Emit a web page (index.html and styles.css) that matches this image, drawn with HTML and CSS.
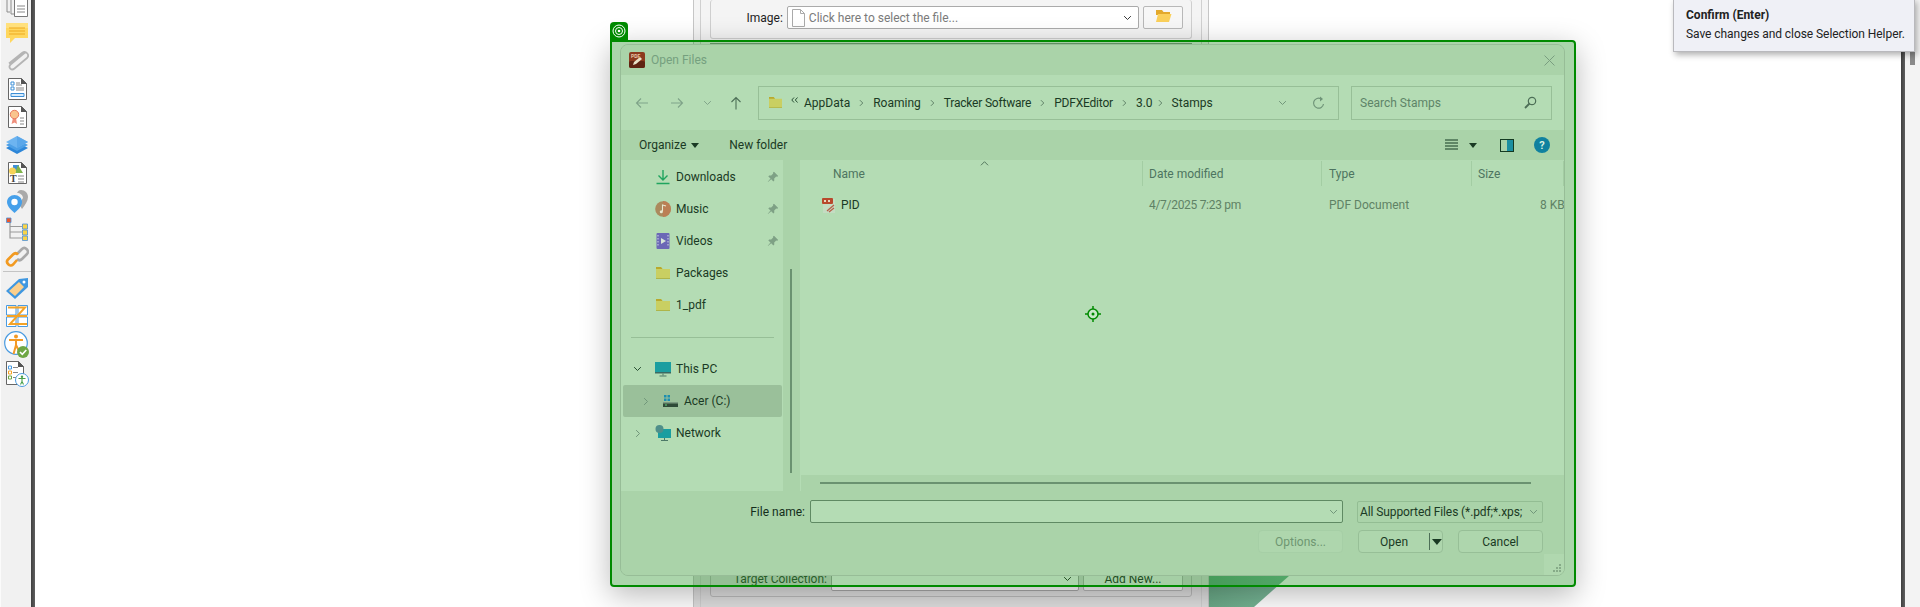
FILE: index.html
```html
<!DOCTYPE html>
<html lang="en">
<head>
  <meta charset="UTF-8">
  <title>Open Files</title>
  <link rel="stylesheet" href="styles.css">
</head>
<body>

  <svg class="defs" aria-hidden="true">
    <symbol id="folder" viewBox="0 0 16 14">
      <path d="M1 1h5l1.500 2H15v10H1z" fill="#c9cf62"/>
      <path d="M1 1h5l1.500 2H1z" fill="#b9a92c"/>
      <path d="M1 12h14v1H1z" fill="#aeb54a"/>
    </symbol>
    <symbol id="pin" viewBox="0 0 12 12">
      <path d="M7 .8l4.200 4.200-1 .8-1-.2-2 2 .1 2-.9.9-2.200-2.300L1 11l-.2-.2 2.700-3.200L1.300 5.400l.9-.9 2 .1 2-2-.2-1z" fill="#7ea185"/>
    </symbol>
    <symbol id="chev-right" viewBox="0 0 8 12">
      <path d="M1.500 1.500L6 6l-4.500 4.500" fill="none" stroke="currentColor" stroke-width="1.300"/>
    </symbol>
    <symbol id="chev-down" viewBox="0 0 12 8">
      <path d="M1.500 1.500L6 6l4.500-4.500" fill="none" stroke="currentColor" stroke-width="1.300"/>
    </symbol>
    <symbol id="tri-down" viewBox="0 0 10 6">
      <path d="M0 0h10L5 6z" fill="currentColor"/>
    </symbol>
  </svg>

  <!-- Left tool strip -->
  <aside class="tools">
    <div class="tool">
      <svg width="24" height="24" viewBox="0 0 24 24"><path d="M2 3v16M2 19h3M6 3v18h3" fill="none" stroke="#8d8d8d"/><path d="M9.500 2.500h9l4 4v17h-13z" fill="#fff" stroke="#777"/><path d="M18 2l5 5h-5z" fill="#555"/><path d="M12 13h8M12 16h8M12 19h8" stroke="#888"/></svg>
    </div>
    <div class="tool">
      <svg width="24" height="24" viewBox="0 0 24 24"><path d="M1 2h22v15H10l-5 5v-5H1z" fill="#ffd75e"/><path d="M1 2h22v5H1z" fill="#ffe07c"/><path d="M4 7h16M4 10h16M4 13h16" stroke="#eda91f"/></svg>
    </div>
    <div class="tool">
      <svg width="24" height="24" viewBox="0 0 24 24"><path d="M20 3.500L5.500 15.500c-3 3 1 6.500 4 4L22 9c3-3-1-8-5-5L4 14.500" fill="none" stroke="#b4b4b4" stroke-width="1.800"/></svg>
    </div>
    <div class="tool">
      <svg width="24" height="24" viewBox="0 0 24 24"><path d="M3.500 1.500h13l5 5v16h-18z" fill="#fff" stroke="#666"/><path d="M16 1l6 6h-6z" fill="#555"/><path d="M6 5h3v3H6zM6 10h3v3H6z" fill="#fff" stroke="#3d8fd6"/><path d="M11 6h4M11 8h6M11 11h8M11 13h8" stroke="#888"/><path d="M6 16.500h13v3H6z" fill="#d7ebfb" stroke="#3d8fd6"/></svg>
    </div>
    <div class="tool">
      <svg width="24" height="24" viewBox="0 0 24 24"><path d="M3.500 1.500h13l5 5v16h-18z" fill="#fff" stroke="#666"/><path d="M16 1l6 6h-6z" fill="#555"/><path d="M8 13l-1.500 6 3-1.500 2.500 1.500-1-6z" fill="#ef8f7c"/><circle cx="9.500" cy="9.500" r="4.200" fill="#f9c48e" stroke="#ea7a62"/><path d="M15 13h4M15 16h4M15 19h4" stroke="#888"/></svg>
    </div>
    <div class="tool">
      <svg width="24" height="24" viewBox="0 0 24 24"><path d="M1 15l11-6 11 6-11 6z" fill="#2d86d8"/><path d="M1 12l11-6 11 6-11 6z" fill="#4c9fe6"/><path d="M1 9l11-6 11 6-11 6z" fill="#6db4f0"/><path d="M12 3l11 6-11 6z" fill="#5aa7ea"/></svg>
    </div>
    <div class="tool">
      <svg width="24" height="24" viewBox="0 0 24 24"><path d="M3.500 1.500h13l5 5v16h-18z" fill="#fff" stroke="#666"/><path d="M16 1l6 6h-6z" fill="#555"/><path d="M8 4h6v6H8z" fill="#3f90d8"/><path d="M13 4l5 8h-8z" fill="#7fb44a"/><circle cx="7.500" cy="10" r="3.500" fill="#f5d257"/><text class="tool-t" x="5" y="21">T</text><path d="M13 15h6M13 18h6M13 21h6" stroke="#888"/></svg>
    </div>
    <div class="tool">
      <svg width="24" height="24" viewBox="0 0 24 24"><path d="M16 1c4 0 7 3 7 7 0 4-3 8-6 12-1-2-2-3-3-5l4-6c0-3-3-5-6-5 1-2 2-3 4-3z" fill="#a9a9a9"/><path d="M9.500 6c4 0 7.500 3 7.500 7 0 4-4 8-7.500 11C6 21 2 17 2 13c0-4 3.500-7 7.500-7z" fill="#46a0ea"/><circle cx="9.500" cy="13" r="3.200" fill="#fff"/></svg>
    </div>
    <div class="tool">
      <svg width="24" height="24" viewBox="0 0 24 24"><path d="M5 5v16h12M5 9.500h12M5 15h12" fill="none" stroke="#9a9a9a" stroke-width="1.200"/><path d="M1.500 1h4.500v4.500H1.500z" fill="#e8582e" stroke="#4a90d9" stroke-width=".8"/><path d="M17.500 7h5v5h-5zM17.500 13h5v5h-5zM17.500 19h5v4.500h-5z" fill="#f9d348" stroke="#4a90d9" stroke-width=".8"/></svg>
    </div>
    <div class="tool">
      <svg width="24" height="24" viewBox="0 0 24 24"><path d="M12 9l5-5c3-3 8 2 5 5l-5 5c-2 2-4 1-5 0" fill="none" stroke="#a8a8a8" stroke-width="2.600"/><path d="M12 15l-4 4.500c-3 3-8-2-5-5l5-5c2-2 4-1 5 0" fill="none" stroke="#f29a21" stroke-width="2.600"/></svg>
    </div>
    <div class="tool-sep"></div>
    <div class="tool">
      <svg width="24" height="24" viewBox="0 0 24 24"><path d="M1 15L14 3l9-1v9L10 23z" fill="#3f97e0"/><path d="M4 15L14 6l5 5-9 9z" fill="#fbcf8c"/><circle cx="19" cy="6" r="1.500" fill="#fff"/></svg>
    </div>
    <div class="tool">
      <svg width="24" height="24" viewBox="0 0 24 24"><path d="M1.500 1.500h9.500v9.500H1.500zM13 1.500h9.500v9.500H13zM1.500 13h9.500v9.500H1.500zM13 13h9.500v9.500H13z" fill="#fff" stroke="#4a9be0"/><path d="M3 3.500h17L5 20h17M2 12h20" fill="none" stroke="#f4a326" stroke-width="2"/></svg>
    </div>
    <div class="tool tool-big">
      <svg width="26" height="28" viewBox="0 0 26 28"><circle cx="12" cy="12" r="11.300" fill="#fff" stroke="#4a9be0" stroke-width="1.200"/><circle cx="12" cy="5.500" r="2" fill="#f39a26"/><path d="M5 9h14M12 9v5l-2.500 9M12 14l2.500 5" fill="none" stroke="#f39a26" stroke-width="2"/><circle cx="19" cy="21" r="6" fill="#6ea644"/><path d="M16 21l2.300 2.300 4-4.300" fill="none" stroke="#fff" stroke-width="1.600"/></svg>
    </div>
    <div class="tool tool-big">
      <svg width="24" height="28" viewBox="0 0 24 28"><path d="M1.500 1.500h12l5 5v18h-17z" fill="#fff" stroke="#666"/><path d="M13 1l6 6h-6z" fill="#555"/><path d="M3.500 6h3v3h-3z" fill="#fff" stroke="#4a9be0"/><path d="M3.500 11h3v3h-3z" fill="#fff" stroke="#f4a326"/><path d="M3.500 16h3v3h-3z" fill="#fff" stroke="#6ea644"/><path d="M8 7.500h5M8 12.500h5M8 17.500h3" stroke="#888"/><circle cx="17" cy="20" r="6.500" fill="#fff" stroke="#4a9be0"/><circle cx="17" cy="16.800" r="1.200" fill="#4aa04a"/><path d="M13.500 18.500h7M17 18.500v3l-1.500 3M17 21.500l1.500 3" fill="none" stroke="#4aa04a" stroke-width="1.100"/></svg>
    </div>
  </aside>
  <div class="page-edge"></div>

  <main class="page"></main>

  <div class="page-edge"></div>
  <div class="scroll"><div class="scroll-thumb"></div></div>

  <!-- Dialog behind the file picker -->
  <section class="form-panel">
    <div class="form-inner">
      <div class="group group-top">
        <label class="form-label">Image:</label>
        <div class="form-combo form-combo-image">
          <svg width="13" height="18" viewBox="0 0 13 18"><path d="M.5.500h8l4 4v13H.500z" fill="#fff" stroke="#aaa"/><path d="M8.500.500v4h4" fill="none" stroke="#aaa"/></svg>
          <span class="placeholder">Click here to select the file...</span>
          <svg class="form-chev" width="9" height="6"><use href="#chev-down"/></svg>
        </div>
        <button class="form-btn form-btn-icon">
          <svg width="17" height="16" viewBox="0 0 17 16"><path d="M1 2h6l1.500 2H15v3H1z" fill="#e3a92c"/><path d="M1 14l2-8h13.500l-2.500 8z" fill="#fbd05a"/></svg>
        </button>
      </div>
      <div class="group group-bottom">
        <label class="form-label form-label-target">Target Collection:</label>
        <div class="form-combo form-combo-target">
          <svg class="form-chev" width="9" height="6"><use href="#chev-down"/></svg>
        </div>
        <button class="form-btn form-btn-add">Add New...</button>
      </div>
    </div>
  </section>
  <div class="stamp-corner"></div>

  <!-- Selection helper tooltip -->
  <div class="tooltip">
    <div class="tooltip-title">Confirm (Enter)</div>
    <div class="tooltip-text">Save changes and close Selection Helper.</div>
  </div>

  <!-- Highlighted window -->
  <section class="selection">
    <div class="selection-tab">
      <svg width="14" height="14" viewBox="0 0 14 14"><circle cx="7" cy="7" r="6" fill="none" stroke="#fff"/><circle cx="7" cy="7" r="3.500" fill="none" stroke="#fff"/><circle cx="7" cy="7" r="1.300" fill="#fff"/></svg>
    </div>
    <div class="selection-line"></div>

    <div class="window">
      <div class="title-bar">
        <svg width="16" height="16" viewBox="0 0 16 16"><rect width="16" height="16" rx="2" fill="#8c3a1e"/><rect y="9" width="16" height="7" rx="2" fill="#5f2412"/><text class="app-text" x="2" y="6">PDF</text><path d="M4 13l1-3 6-5 2 2-6 5z" fill="#e9e2c8"/></svg>
        <span class="title-text">Open Files</span>
        <svg class="close-x" width="11" height="11" viewBox="0 0 11 11"><path d="M.5.500l10 10M10.500.500l-10 10" stroke="#7a9e80"/></svg>
      </div>

      <div class="address-band">
        <svg class="nav-back" width="14" height="12" viewBox="0 0 14 12"><path d="M13 6H1.500M6 1.500L1.500 6 6 10.500" fill="none" stroke="#7fa389" stroke-width="1.100"/></svg>
        <svg class="nav-fwd" width="14" height="12" viewBox="0 0 14 12"><path d="M1 6h11.500M8 1.500L12.500 6 8 10.500" fill="none" stroke="#7fa389" stroke-width="1.100"/></svg>
        <svg class="nav-down" width="9" height="6"><use href="#chev-down"/></svg>
        <svg class="nav-up" width="12" height="14" viewBox="0 0 12 14"><path d="M6 13.500V1.500M1.500 6L6 1.500 10.500 6" fill="none" stroke="#4d6f57" stroke-width="1.100"/></svg>

        <div class="address-box">
          <svg class="crumb-folder" width="15" height="13"><use href="#folder"/></svg>
          <svg class="crumb-more" width="7" height="6" viewBox="0 0 7 6"><path d="M3 .5L.8 3 3 5.500M6.500.5L4.300 3l2.200 2.500" fill="none" stroke="#2c5238"/></svg>
          <span class="crumb">AppData</span>
          <svg class="crumb-sep" width="5" height="8"><use href="#chev-right"/></svg>
          <span class="crumb">Roaming</span>
          <svg class="crumb-sep" width="5" height="8"><use href="#chev-right"/></svg>
          <span class="crumb crumb-tight">Tracker Software</span>
          <svg class="crumb-sep" width="5" height="8"><use href="#chev-right"/></svg>
          <span class="crumb crumb-tight">PDFXEditor</span>
          <svg class="crumb-sep" width="5" height="8"><use href="#chev-right"/></svg>
          <span class="crumb crumb-short">3.0</span>
          <svg class="crumb-sep" width="5" height="8"><use href="#chev-right"/></svg>
          <span class="crumb">Stamps</span>
          <svg class="address-chev" width="9" height="6"><use href="#chev-down"/></svg>
          <svg class="address-refresh" width="13" height="14" viewBox="0 0 13 14"><path d="M11.500 8A5 5 0 1 1 9 2.800" fill="none" stroke="#6f9478" stroke-width="1.200"/><path d="M8 .5l3 2.500-3 2.500z" fill="#6f9478"/></svg>
        </div>

        <div class="search-box">
          <span>Search Stamps</span>
          <svg width="13" height="13" viewBox="0 0 13 13"><circle cx="8" cy="5" r="3.700" fill="none" stroke="#4d6f57" stroke-width="1.200"/><path d="M5.500 7.500L1 12" stroke="#4d6f57" stroke-width="1.800"/></svg>
        </div>
      </div>

      <div class="toolbar">
        <span class="tb-text">Organize</span>
        <svg class="tb-caret" width="8" height="5"><use href="#tri-down"/></svg>
        <span class="tb-text tb-new">New folder</span>
        <svg class="tb-view" width="13" height="12" viewBox="0 0 13 12"><path d="M0 1h13M0 4h13M0 7h13M0 10h13" stroke="#143a22"/></svg>
        <svg class="tb-view-caret" width="8" height="5"><use href="#tri-down"/></svg>
        <svg class="tb-pane" width="14" height="13" viewBox="0 0 14 13"><rect x=".5" y=".5" width="13" height="12" fill="none" stroke="#143a22"/><rect x="7" y="1" width="6" height="11" fill="#1c8fa0"/></svg>
        <svg class="tb-help" width="16" height="16" viewBox="0 0 16 16"><circle cx="8" cy="8" r="8" fill="#10819f"/><text class="help-text" x="5.200" y="12">?</text></svg>
      </div>

      <div class="main-row">
        <nav class="nav-pane">
          <div class="nav-row">
            <svg class="nav-icon" width="16" height="16" viewBox="0 0 16 16"><path d="M8 1v10M3.500 6.500L8 11l4.500-4.500" fill="none" stroke="#1fa45e" stroke-width="1.400"/><path d="M1.500 14.500h13" stroke="#1fa45e" stroke-width="1.400"/></svg>
            <span>Downloads</span>
            <svg class="nav-pin" width="12" height="12"><use href="#pin"/></svg>
          </div>
          <div class="nav-row">
            <svg class="nav-icon" width="16" height="16" viewBox="0 0 16 16"><circle cx="8" cy="8" r="7.800" fill="#ab8a5d"/><path d="M8 0a8 8 0 0 1 0 16z" fill="#bb7f55"/><path d="M7.500 10.500V4l3.500 1" fill="none" stroke="#e8e8d0" stroke-width="1.100"/><circle cx="6.300" cy="10.800" r="1.500" fill="#e8e8d0"/></svg>
            <span>Music</span>
            <svg class="nav-pin" width="12" height="12"><use href="#pin"/></svg>
          </div>
          <div class="nav-row">
            <svg class="nav-icon" width="16" height="16" viewBox="0 0 16 16"><rect x="1.500" width="13" height="16" rx="1" fill="#6b68b6"/><path d="M6 5l5 3-5 3z" fill="#d7e6d8"/><path d="M3 2v12M13 2v12" stroke="#d2d6e8" stroke-dasharray="1.500 1.500"/></svg>
            <span>Videos</span>
            <svg class="nav-pin" width="12" height="12"><use href="#pin"/></svg>
          </div>
          <div class="nav-row">
            <svg class="nav-icon" width="16" height="14"><use href="#folder"/></svg>
            <span>Packages</span>
          </div>
          <div class="nav-row">
            <svg class="nav-icon" width="16" height="14"><use href="#folder"/></svg>
            <span>1_pdf</span>
          </div>
          <div class="nav-sep"></div>
          <div class="nav-row">
            <svg class="nav-chev nav-chev-open" width="9" height="6"><use href="#chev-down"/></svg>
            <svg class="nav-icon" width="16" height="15" viewBox="0 0 16 15"><rect y="0" width="16" height="11" fill="#1b9ea0"/><rect y="10" width="16" height="1.500" fill="#3b6a63"/><path d="M8 11.500v2M4.500 14h7" stroke="#4c7867"/></svg>
            <span>This PC</span>
          </div>
          <div class="nav-row nav-row-active">
            <svg class="nav-chev" width="6" height="9"><use href="#chev-right"/></svg>
            <svg class="nav-icon" width="16" height="14" viewBox="0 0 16 14"><path d="M1 1h2.500v2.500H1zM4.500 1H7v2.500H4.500zM1 4.500h2.500V7H1zM4.500 4.500H7V7H4.500z" fill="#1c8fb0"/><rect y="8" width="15" height="5" fill="#2e4a37"/><rect y="8" width="15" height="1.500" fill="#7a9a80"/><rect x="2" y="10.500" width="2" height="1" fill="#5fd07f"/></svg>
            <span>Acer (C:)</span>
          </div>
          <div class="nav-row">
            <svg class="nav-chev" width="6" height="9"><use href="#chev-right"/></svg>
            <svg class="nav-icon" width="16" height="16" viewBox="0 0 16 16"><rect x="3" y="4" width="13" height="9" fill="#1b9ea0"/><circle cx="4.500" cy="4" r="4" fill="#4f8f8a"/><path d="M9.500 13v2M6 15.500h7" stroke="#4c7867"/></svg>
            <span>Network</span>
          </div>
        </nav>

        <div class="nav-gutter"><div class="nav-scroll"></div></div>

        <div class="files">
          <div class="file-pane">
            <svg class="sort-chev" width="9" height="5" viewBox="0 0 12 7"><path d="M1 6l5-5 5 5" fill="none" stroke="#4d6f57" stroke-width="1.300"/></svg>
            <div class="file-grid file-head">
              <span class="col-name">Name</span>
              <span>Date modified</span>
              <span class="col-type">Type</span>
              <span>Size</span>
            </div>
            <div class="file-grid file-row">
              <span class="col-file">
                <svg width="14" height="15" viewBox="0 0 14 15"><path d="M1 1h12v14H1z" fill="#c4dcc2"/><rect width="11" height="6" rx="1" fill="#b8482c"/><path d="M2 2h2v2H2zM6 2h2v2H6z" fill="#e8d8c0"/><path d="M5 13l7-6M7 14l5-4" stroke="#b8604a" stroke-width="1.300"/></svg>
                <span class="file-name">PID</span>
              </span>
              <span class="file-meta col-date">4/7/2025 7:23 pm</span>
              <span class="file-meta col-type">PDF Document</span>
              <span class="file-meta col-size">8 KB</span>
            </div>
          </div>
          <div class="hscroll-band"><div class="hscroll"></div></div>
        </div>
      </div>

      <div class="footer">
        <div class="footer-row">
          <label class="footer-label">File name:</label>
          <div class="name-input"><svg width="9" height="6"><use href="#chev-down"/></svg></div>
          <div class="type-combo">
            <span class="type-text">All Supported Files (*.pdf;*.xps;</span>
            <svg width="9" height="6"><use href="#chev-down"/></svg>
          </div>
        </div>
        <div class="footer-row footer-buttons">
          <button class="dlg-btn dlg-btn-off">Options...</button>
          <button class="dlg-btn dlg-btn-open">
            <span class="open-label">Open</span>
            <span class="open-split"></span>
            <svg width="10" height="6"><use href="#tri-down"/></svg>
          </button>
          <button class="dlg-btn">Cancel</button>
        </div>
      </div>

      <div class="grip">
        <svg width="9" height="9" viewBox="0 0 9 9"><path d="M7 0h2v2H7zM4 3h2v2H4zM7 3h2v2H7zM1 6h2v2H1zM4 6h2v2H4zM7 6h2v2H7z" fill="#86ab88"/></svg>
      </div>
    </div>

    <svg class="target" width="16" height="16" viewBox="0 0 16 16">
      <circle cx="8" cy="8" r="5" fill="#c8e8c8" stroke="#008a00" stroke-width="1.500"/>
      <circle cx="8" cy="8" r="1.500" fill="#008a00"/>
      <path d="M8 0v3M8 13v3M0 8h3M13 8h3" stroke="#008a00" stroke-width="1.500"/>
    </svg>
  </section>

</body>
</html>
```

FILE: styles.css
```css
* {
  box-sizing: border-box;
}

html,
body {
  height: 100%;
}

body {
  position: relative;
  display: flex;
  margin: 0;
  overflow: hidden;
  background-color: #fff;
  color: #1a3a24;
  font-family: Roboto, "Liberation Sans", sans-serif;
  font-size: 12px;
}

button {
  font-family: inherit;
  font-size: 12px;
}

.defs {
  position: absolute;
  width: 0;
  height: 0;
}

/* left tool strip */
.tools {
  display: flex;
  flex-direction: column;
  align-items: center;
  flex: none;
  width: 31px;
  margin-top: -9px;
  padding-left: 1px;
  background-color: #f1f1f1;
  border-left: 1px solid #fbfbfb;
}

.tool {
  display: flex;
  align-items: center;
  justify-content: center;
  flex: none;
  height: 28px;
}

.tool-big {
  margin-top: 1px;
}

.tool-sep {
  flex: none;
  width: 28px;
  height: 1px;
  margin: 0 0 2px;
  background-color: #c4c4c4;
}

.tool-t {
  fill: #444;
  font-family: "Liberation Serif", serif;
  font-size: 10px;
  font-weight: bold;
}

.page-edge {
  flex: none;
  width: 4px;
  background: linear-gradient(to right, #3f3f3f, #5f5f5f);
}

.page {
  flex: 1;
}

.scroll {
  flex: none;
  width: 15px;
  padding-left: 5px;
  background-color: #f3f3f3;
}

.scroll-thumb {
  width: 5px;
  height: 65px;
  background-color: #8a8a8a;
}

/* dialog behind */
.form-panel {
  position: absolute;
  left: 693px;
  top: 0;
  width: 516px;
  height: 607px;
  padding: 0 6px;
  background: linear-gradient(to bottom, #f4f4f4 10%, #dedede 92%);
  border: solid #c6c6c6;
  border-width: 0 1px;
}

.form-inner {
  display: flex;
  flex-direction: column;
  justify-content: space-between;
  height: 100%;
  padding: 0 9px 10px;
  border: solid #d0d0d0;
  border-width: 0 1px;
}

.group {
  display: flex;
  align-items: center;
  border: 1px solid #cfcfcf;
  border-radius: 3px;
}

.group-top {
  height: 39px;
  padding: 0 8px 3px 0;
  border-top: none;
}

.group-bottom {
  height: 50px;
  padding: 14px 8px 0 0;
  border-color: #bbb;
  color: #4d4d4d;
}

.form-label {
  width: 72px;
  margin-right: 4px;
  text-align: right;
  color: #222;
}

.form-label-target {
  width: 116px;
  color: #3d4d3d;
}

.form-combo {
  display: flex;
  align-items: center;
  height: 23px;
  padding: 0 6px 0 4px;
  background-color: #fff;
  border: 1px solid #aaa;
  border-radius: 2px;
}

.form-combo-image {
  width: 353px;
}

.form-combo-target {
  width: 248px;
}

.placeholder {
  margin-left: 4px;
  color: #7b7b7b;
}

.form-chev {
  margin-left: auto;
  color: #333;
}

.form-btn {
  height: 23px;
  margin-left: 4px;
  padding: 0;
  background-color: #f7f7f7;
  border: 1px solid #b8b8b8;
  border-radius: 2px;
}

.form-btn-icon {
  width: 40px;
}

.form-btn-add {
  width: 100px;
  color: #333;
}

.stamp-corner {
  position: absolute;
  left: 1209px;
  top: 560px;
  width: 98px;
  height: 47px;
  background: linear-gradient(to right, #6aa987, #7fbe9f);
  clip-path: polygon(0 0, 98px 0, 45px 47px, 0 47px);
}

/* tooltip */
.tooltip {
  position: absolute;
  left: 1673px;
  top: -1px;
  width: 242px;
  height: 53px;
  padding: 6px 0 0 12px;
  background-color: #eff0f6;
  border: 1px solid #b9b9bd;
  box-shadow: 2px 3px 6px rgba(0, 0, 0, 0.3);
  line-height: 19px;
  color: #222;
}

.tooltip-title {
  font-weight: bold;
}

.tooltip-text {
  letter-spacing: -0.06px;
}

/* selection overlay */
.selection {
  position: absolute;
  left: 610px;
  top: 40px;
  width: 966px;
  height: 547px;
  padding: 2px 9px 9px 8px;
  background-color: rgba(0, 128, 0, 0.33);
  border: 2px solid #008a00;
  border-radius: 0 4px 4px 4px;
  box-shadow: 0 8px 30px rgba(0, 0, 0, 0.28);
}

.selection-tab {
  position: absolute;
  left: -2px;
  top: -20px;
  display: flex;
  align-items: center;
  justify-content: center;
  width: 18px;
  height: 18px;
  background-color: #008a00;
  border-radius: 4px 4px 0 0;
}

.selection-line {
  position: absolute;
  left: 98px;
  top: 1px;
  width: 482px;
  height: 1px;
  background-color: #5f8f62;
}

.window {
  position: relative;
  display: flex;
  flex-direction: column;
  height: 100%;
  overflow: hidden;
  background-color: #aad3a9;
  border: 1px solid #97bd97;
  border-radius: 8px;
}

.title-bar {
  display: flex;
  align-items: center;
  flex: none;
  height: 30px;
  padding: 0 9px 0 8px;
  background-color: #aad3a9;
}

.app-text {
  fill: #e8c8a8;
  font-size: 5px;
  font-weight: bold;
}

.title-text {
  margin-left: 6px;
  color: #75a07f;
}

.close-x {
  margin-left: auto;
}

.address-band {
  display: flex;
  align-items: center;
  flex: none;
  height: 55px;
  padding-left: 14px;
  background-color: #b4dcb4;
  color: #7fa389;
}

.nav-fwd {
  margin-left: 21px;
}

.nav-down {
  margin-left: 19px;
}

.nav-up {
  margin-left: 18px;
}

.address-box {
  display: flex;
  align-items: center;
  width: 581px;
  height: 34px;
  margin-left: 16px;
  padding: 0 13px 0 9px;
  border: 1px solid #97bf97;
  color: #1a3a24;
}

.crumb-folder {
  margin-right: 8px;
}

.crumb-more {
  margin-right: 6px;
  margin-top: -6px;
}

.crumb-sep {
  margin: 0 9px;
  color: #4d6f57;
}

.crumb-tight {
  letter-spacing: -0.2px;
}

.crumb-short {
  margin-right: -4px;
}

.address-chev {
  margin-left: auto;
  margin-right: 25px;
  color: #6f9478;
}

.search-box {
  display: flex;
  align-items: center;
  justify-content: space-between;
  width: 201px;
  height: 34px;
  margin-left: 12px;
  padding: 0 14px 0 8px;
  border: 1px solid #97bf97;
  color: #5e8468;
}

.toolbar {
  display: flex;
  align-items: center;
  flex: none;
  height: 30px;
  padding-left: 18px;
  background-color: #aad3a9;
  color: #1a3a24;
}

.tb-caret {
  margin-left: 5px;
}

.tb-new {
  margin-left: 30px;
}

.tb-view {
  margin-left: auto;
}

.tb-view-caret {
  margin-left: 11px;
}

.tb-pane {
  margin-left: 23px;
}

.tb-help {
  margin-left: 20px;
  margin-right: 14px;
}

.help-text {
  fill: #d8f0e0;
  font-size: 11px;
  font-weight: bold;
}

.main-row {
  display: flex;
  flex: none;
  height: 331px;
}

/* navigation pane */
.nav-pane {
  flex: none;
  width: 162px;
  padding-top: 1px;
  background-color: #b4dcb4;
}

.nav-row {
  position: relative;
  display: flex;
  align-items: center;
  height: 32px;
  padding: 0 4px 0 34px;
}

.nav-icon {
  flex: none;
  width: 16px;
  margin-right: 5px;
}

.nav-pin {
  margin-left: auto;
}

.nav-chev {
  position: absolute;
  left: 14px;
  color: #6f9478;
}

.nav-chev-open {
  color: #234a2e;
  left: 12px;
}

.nav-row-active {
  margin: 0 1px 0 2px;
  padding-left: 40px;
  background-color: #9ac09a;
  border-radius: 2px;
}

.nav-row-active .nav-chev {
  left: 20px;
}

.nav-sep {
  height: 1px;
  margin: 16px 9px 15px 10px;
  background-color: #97bf97;
}

.nav-gutter {
  flex: none;
  width: 18px;
  padding-left: 7px;
  background-color: #aad3a9;
  border-right: 1px solid #b4dcb4;
}

.nav-scroll {
  width: 2px;
  height: 204px;
  margin-top: 109px;
  background-color: #6a9270;
}

/* file list */
.files {
  display: flex;
  flex-direction: column;
  flex: 1;
  min-width: 0;
}

.file-pane {
  position: relative;
  flex: 1;
  background-color: #b4dcb4;
}

.sort-chev {
  position: absolute;
  left: 179px;
  top: 1px;
}

.file-grid {
  display: grid;
  grid-template-columns: 342px 179px 150px 1fr;
}

.file-head {
  height: 26px;
  padding-top: 1px;
  color: #4d7460;
}

.file-head span {
  display: flex;
  align-items: center;
  padding-left: 6px;
  border-right: 1px solid #a3cda3;
}

.file-head .col-name {
  padding-left: 32px;
}

.file-head .col-type,
.file-row .col-type {
  padding-left: 7px;
}

.file-row {
  align-items: center;
  height: 24px;
  margin-top: 7px;
}

.col-file {
  display: flex;
  align-items: center;
  gap: 5px;
  padding-left: 21px;
}

.file-name {
  color: #1a3a24;
}

.file-meta {
  padding-left: 6px;
  color: #5f8265;
  white-space: nowrap;
}

.col-date {
  letter-spacing: -0.3px;
}

.col-size {
  padding-left: 68px;
}

.hscroll-band {
  display: flex;
  align-items: center;
  flex: none;
  height: 16px;
  padding-left: 19px;
  background-color: #aad3a9;
}

.hscroll {
  width: 711px;
  height: 2px;
  background-color: #6a9270;
}

/* footer */
.footer {
  display: flex;
  flex-direction: column;
  flex: 1;
  gap: 7px;
  padding-top: 9px;
  background-color: #aad3a9;
}

.footer-row {
  display: flex;
  align-items: center;
  height: 23px;
}

.footer-label {
  width: 184px;
  margin-right: 5px;
  text-align: right;
  color: #142e1c;
}

.name-input {
  display: flex;
  align-items: center;
  justify-content: flex-end;
  width: 533px;
  height: 23px;
  padding-right: 4px;
  background-color: #b4dcb4;
  border: 1px solid #5f8a63;
  border-radius: 2px;
  color: #6f9478;
}

.type-combo {
  display: flex;
  align-items: center;
  width: 186px;
  height: 22px;
  margin-left: 14px;
  padding: 0 4px 0 2px;
  border: 1px solid #93bd93;
  border-radius: 2px;
  color: #6f9478;
}

.type-text {
  flex: 1;
  min-width: 0;
  white-space: nowrap;
  letter-spacing: -0.1px;
  color: #1a3a24;
}

.footer-buttons {
  justify-content: flex-end;
  gap: 15px;
  padding-right: 21px;
}

.dlg-btn {
  display: flex;
  align-items: center;
  justify-content: center;
  width: 85px;
  height: 23px;
  padding: 0;
  background-color: #aed6ad;
  border: 1px solid #97bf97;
  border-radius: 4px;
  color: #1a3a24;
}

.dlg-btn-off {
  border-color: #a6cfa6;
  color: #6f9672;
}

.dlg-btn-open {
  justify-content: flex-start;
}

.open-label {
  width: 71px;
  text-align: center;
}

.open-split {
  width: 1px;
  height: 17px;
  margin-right: 2px;
  background-color: #4d6f57;
}

.grip {
  position: absolute;
  right: 0;
  bottom: 0;
  display: flex;
  align-items: flex-end;
  justify-content: flex-end;
  width: 20px;
  height: 21px;
  padding: 0 3px 2px 0;
  background-color: #b0d8af;
}

.target {
  position: absolute;
  left: 473px;
  top: 264px;
}
```
